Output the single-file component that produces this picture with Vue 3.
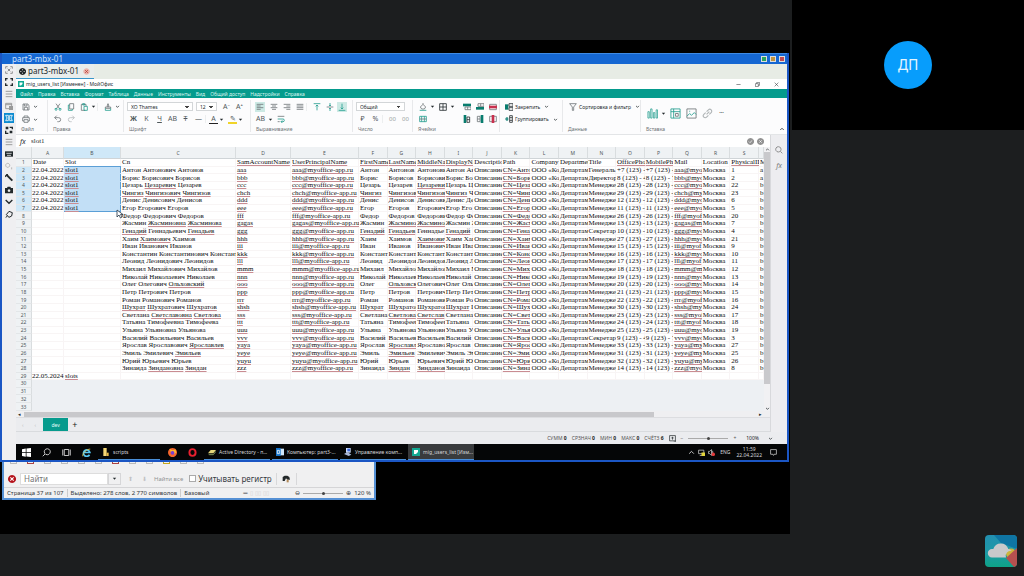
<script setup>
import { h, ref } from 'vue'

const G = '#6d7376'
const T = '#1f9c8d'
const K = '#22292c'
const R = '#c8304e'

// Each icon is a list of [path, colour, filled, stroke width]
const icons = {
  save: [['M1.5 1.5h7l2 2v7h-9zM3.5 1.5v3h4v-3M3.5 10.500v-4h5v4', G]],
  print: [['M3 4V1.500h6V4M3 9H1V4h10v5H9M3 7h6v4H3z', G]],
  cut: [['M3 1l5 7M9 1L4 8', G], ['M3 8a1.500 1.500 0 1 0 .1 0M9 8a1.500 1.500 0 1 0 .1 0', T]],
  copy: [['M4 1h6v8H4z', G], ['M4 3H2v8h6V9', T]],
  paste: [['M8 11H2V2h7v3', G], ['M4 1h3v2H4zM6 5h5v6H6z', T]],
  brush: [['M2 6h8v2H2zM5 6V3l1-2 1 2v3', G], ['M2 8v3h8V8', T]],
  undo: [['M4 1L1 4l3 3M1 4h6a3 3 0 0 1 0 6H5', G]],
  redo: [['M8 1l3 3-3 3M11 4H5a3 3 0 0 0 0 6h2', '#b4b9bb']],
  left: [['M1 2h10M1 4.500h6M1 7h10M1 9.500h6', G]],
  center: [['M1 2h10M3 4.500h6M1 7h10M3 9.500h6', G]],
  right: [['M1 2h10M5 4.500h6M1 7h10M5 9.500h6', G]],
  justify: [['M1 2h10M1 4.500h10M1 7h10M1 9.500h10', G]],
  vtop: [['M1 1h10M6 11V3M4 5l2-2 2 2', T]],
  vmid: [['M1 6h10', G], ['M6 0v4M4.500 3L6 4.500 7.500 3M6 12V8M4.500 9L6 7.500 7.500 9', T]],
  vbot: [['M1 11h10M6 1v8M4 7l2 2 2-2', T]],
  wrap: [['M1 2h10M1 10h3', G], ['M1 6h8a2 2 0 0 1 0 4H6M8 8l-2 2 2 2', T]],
  fill: [['M2 6l4-4 4 4-2 3H4zM6 2V0', G], ['M1 11h10', T]],
  borders: [['M1 1h10v10H1zM6 1v10M1 6h10', K]],
  merge: [['M1 2h10v8H1zM4 2v8M8 2v8', T], ['M1 6h10', G]],
  rowAdd: [['M0 1h12v4H0z', '#087c6e', 1], ['M3 6h9v4H3zM7 6v4', G]],
  rowBelow: [['M3 1h9v4H3zM7 1v4', G], ['M0 6h12v4H0z', '#087c6e', 1]],
  rowDel: [['M1 2h10v8H1z', G], ['M0 4h12v4H0z', R, 1]],
  colAdd: [['M1 0h4v12H1z', '#087c6e', 1], ['M6 3h4v8H6zM6 7h4', K]],
  colRight: [['M2 2h4v8H2zM2 6h4', G], ['M7 0h4v12H7z', '#087c6e', 1]],
  colDel: [['M1 2h10v8H1z', G], ['M4 0h4v12H4z', R, 1]],
  freeze: [['M0 2h5v8H0z', '#087c6e', 1], ['M6 1h6v4H6zM6 7h6v4H6z', K]],
  group: [['M2 4h2v4H2zM0 6h5', '#087c6e'], ['M7 1h4v10H7zM7 4h4M7 8h4', K]],
  funnel: [['M1 1h10L7 6v5H5V6z', G]],
  chart: [['M1 11V4h1.500v7zM4 11V1h1.500v10zM7 11V5h1.500v6zM10 11V2h1.500v9z', T, 0, 0.8]],
  pivot: [['M1 1h10v10H1zM1 4h10M4 1v10', T, 0, 0.9], ['M6 6h3v3H6z', G, 0, 0.9]],
  image: [['M1 1h10v10H1z', G, 0, 0.9], ['M1 9l3-3 2 2 3-3 2 2M4 3v1', T, 0, 0.9]],
  link: [['M5 7l3-3M5 4l2-2a2 2 0 0 1 3 3L8 7M4 5L2 7a2 2 0 0 0 3 3l2-2', '#b0b5b7']],
  down: [['M2.500 4.500L6 8l3.500-3.500', K, 0, 1.8]],
  caret: [['M2 4h8L6 9z', K, 1]],
  up: [['M2.500 8L6 4.500 9.500 8', K, 0, 1.6]],
  search: [['M5 1a4 4 0 1 0 .1 0M8 8l3 3', '#777']],
  lens: [['M7 1a4 4 0 1 0 .1 0M4 8l-3 3', '#ddd']],
  ok: [['M6 0a6 6 0 1 0 .1 0', '#929292', 1], ['M3 6l2 2 4-4', '#fff']],
  no: [['M6 0a6 6 0 1 0 .1 0', '#929292', 1], ['M4 4l4 4M8 4L4 8', '#fff']],
  close: [['M6 0a6 6 0 1 0 .1 0', '#b5121b', 1], ['M3.500 3.500l5 5M8.500 3.500l-5 5', '#fff', 0, 1.6]],
  tabClose: [['M6 .5a5.500 5.500 0 1 0 .1 0', '#e9b4ac', 1], ['M3.500 3.500l5 5M8.500 3.500l-5 5', '#b3372e']],
  gearball: [['M6 0a6 6 0 1 0 .1 0', '#20262a', 1], ['M6 2v8M2 6h8', '#fff'], ['M6 4a2 2 0 1 0 .1 0', '#20262a', 1]],
  min: [['M1 6h10', K]],
  rest: [['M1 4h7v7H1zM4 4V1h7v7H8', K]],
  x: [['M1.500 1.500l9 9M10.500 1.500l-9 9', K]],
  doc: [['M0 0h12v12H0z', '#12a892', 1], ['M3 3h6v3L6 9H3z', '#fff', 1]],
  win: [['M0 1.500l5-.7v5H0zM6 .7l6-.7v5.800H6zM0 6.500h5v5l-5-.7zM6 6.500h6V12l-6-.7z', '#fff', 1]],
  view: [['M3 2h6v8H3zM1 2v8M11 2v8', '#ddd']],
  ie: [['M10 9a4.300 4.300 0 1 1 .5-3H3', '#56c8f4', 0, 2.2], ['M1 11C0 7 7 1 11 1.500', '#f5d24a', 0, 1]],
  folder: [['M2 0h5v12H2z', '#f6d774', 1], ['M7 7h3v5H7z', '#e8b947', 1]],
  fox: [['M6 0a6 6 0 1 0 .1 0', '#f6662c', 1], ['M2 1l4 2 4-1 1 4-3 2-4-2z', '#ffb72e', 1], ['M6 4a2.500 2.500 0 1 0 .1 0', '#7a3fd0', 1]],
  opera: [['M6 1.500C.5 1.500 .5 10.500 6 10.500S11.500 1.500 6 1.500', '#e8202f', 0, 2.6]],
  ad: [['M0 8l4-5h8l-4 5z', '#e6d77a', 1], ['M1 10h7l4-5', '#9bb06a']],
  outlook: [['M4 1h8v10H4z', '#cfe6fa', 1], ['M0 0h7v12H0z', '#1573c9', 1], ['M2 3.500h3v5H2z', '#fff']],
  pc: [['M3 0h7v7H3z', '#cfe0ff', 1], ['M5 1h4v4H5z', '#3b66d9', 1], ['M0 9l5-3 6 4-4 2z', '#a9b8d8', 1]],
  net: [['M1 2h9v6H1zM3 11h5', '#ddd'], ['M6 6h6v6H6z', '#e3d43b', 1]],
  vol: [['M1 4h2l3-3v10L3 8H1zM8 3v6', '#ddd'], ['M9 6a3 3 0 1 0 .1 0', '#e23b3b', 1]],
  note: [['M1 1h10v8H7l-1 2-1-2H1z', '#ddd']],
  binocular: [['M1 3l3-2h4l3 2 1 4H8L6 5 4 9H1z', '#23282a', 1], ['M7 7h3v4H7z', '#b38a5a', 1]],
  fit: [['M1 4V1h3M8 1h3v3M11 8v3H8M4 11H1V8M4 4l4 4M8 4L4 8', '#777']],
  full: [['M1 4V1h3M8 1h3v3M11 8v3H8M4 11H1V8', K, 0, 2]],
  lines: [['M1 2h10M1 6h10M1 10h10', '#888']],
  windows: [['M1 2h9v8H1zM1 4h9', '#888'], ['M6 6h6v6H6z', '#999', 1]],
  split: [['M1 2h4v8H1l2-4zM11 2H7v8h4L9 6z', '#fff']],
  swap: [['M1 5V1h4v4zM7 7h4v4H7z', K, 1], ['M7 2h4v3M1 7v4h4', K, 0, 2]],
  keyb: [['M0 2h12v8H0z', K, 1], ['M2 5h8M3 8h6', '#eee']],
  gears: [['M4 2a3 3 0 1 0 .1 0M10 8v3', '#aaa']],
  wrench: [['M2 1l3 3 6 6', K, 0, 3], ['M0 4l4-4', K, 0, 2]],
  camera: [['M0 3h3l1-2h4l1 2h3v8H0z', K, 1], ['M6 5a2 2 0 1 0 .1 0', '#eee', 1]],
  chev: [['M1 3l5 5 5-5', K, 0, 2]],
  plug: [['M4 9L2 7l4-5 5 2-1 5-4 2zM1 11l3-2', K, 0, 1.5]],
  fnbox: [['M1 1h10v9H1zM6 3v5M4 5h4M8 12h4V9', K]],
}
const Ico = (p) =>
  h('svg', { viewBox: '0 0 12 12', 'aria-hidden': 'true' },
    icons[p.n].map(([d, c, f, w]) => h('path', { d, fill: f ? c : 'none', stroke: f ? 'none' : c, 'stroke-width': w || 1.2 })))
Ico.props = ['n']

const tools = ['fit', 'full', 'lines', 'windows', 'split', 'swap', 'lines', 'keyb', 'gears', 'wrench', 'camera', 'chev', 'plug']
const menu = ['Файл', 'Правка', 'Вставка', 'Формат', 'Таблица', 'Данные', 'Инструменты', 'Вид', 'Общий доступ', 'Надстройки', 'Справка']

const i = (n, c) => ({ n, c })
const t = (x, c) => ({ x, c })
const dd = { n: 'caret', c: 'dd' }
const dv = { n: 'down', c: 'dd' }
const sp = { c: 'sp' }
const groups = [
  { k: 'file', label: 'Файл', rows: [[i('save'), dv], [i('print'), dv]] },
  { k: 'edit', label: 'Правка', rows: [[i('cut'), i('copy'), i('paste'), dd, sp, i('brush'), dv], [i('undo'), i('redo')]] },
  { k: 'font', label: 'Шрифт', rows: [[{ s: 'XO Thames', c: 'wide', a: 'Шрифт' }, { s: '12', c: 'num', a: 'Размер шрифта' }, t('A⁻'), t('A⁺')],
    [t('Ж', 'b'), t('К'), t('Ч', 'u'), t('AB'), t('Т', 'st'), t('—'), sp, t('A', 'tc'), dd, t('✎', 'hl'), dd]] },
  { k: 'align', label: 'Выравнивание', rows: [[i('left', 'on'), i('center'), i('right'), i('justify'), sp, i('vtop'), i('vmid'), i('vbot', 'on')], [t('AB'), dd, i('wrap')]] },
  { k: 'number', label: 'Число', rows: [[{ s: 'Общий', c: 'mid', a: 'Формат числа' }], [t('₽'), t('%'), sp, t('00', 'dec'), t('00', 'dec')]] },
  { k: 'cells', label: 'Ячейки', rows: [[i('fill'), dd, i('borders'), dd], [i('merge')]] },
  { k: 'rowsg', label: '', rows: [[i('rowAdd'), i('rowBelow'), i('rowDel')], [i('colAdd'), i('colRight'), i('colDel')]] },
  { k: 'pin', label: '', rows: [[i('freeze'), t('Закрепить', 'txt'), dv], [i('group'), t('Группировать', 'txt'), dv]] },
  { k: 'data', label: 'Данные', rows: [[i('funnel'), t('Сортировка и фильтр', 'txt'), dv], []] },
  { k: 'insert', label: 'Вставка', rows: [[i('chart', 'big'), dd, i('pivot', 'big'), i('image', 'big'), i('link', 'big'), t('•••')]] },
]

const letters = 'ABCDEFGHIJKLMNOPQRS'.split('')
// Words with a leading * carry a spelling mark
const people = [
  ['Антон Антонович Антонов', 'aaa', '+7 (123) -', 1, 'Генераль'],
  ['Борис Борисович Борисов', 'bbb', '8 (123) - 4', 2, 'Директор'],
  ['Цезарь *Цезаревич Цезарев', 'ccc', 28, 22],
  ['*Чингиз *Чингизович *Чингизов', 'chch', 29, 23],
  ['Денис Денисович Денисов', 'ddd', 12, 6],
  ['Егор Егорович Егоров', 'eee', 11, 5],
  ['Федор Федорович Федоров', 'fff', 26, 20],
  ['Жасмин *Жасминовна *Жасминова', 'gagas', 13, 7],
  ['*Генадий Геннадьевич *Генадьев', 'ggg', 10, 4, 'Секретар'],
  ['Хаим *Хаимович Хаимов', 'hhh', 27, 21],
  ['Иван Иванович Иванов', 'iii', 15, 9],
  ['Константин Константинович Константин', 'kkk', 16, 10],
  ['Леонид Леонидович Леонидов', 'lll', 17, 11],
  ['Михаил Михайлович Михайлов', 'mmm', 18, 12],
  ['Николай Николаевич Николаев', 'nnn', 19, 13],
  ['Олег Олегович *Ольховский', 'ooo', 20, 14],
  ['Петр Петрович Петров', 'ppp', 21, 15],
  ['Роман Романович Романов', 'rrr', 22, 16],
  ['*Шухрат *Шухратович *Шухратов', 'shsh', 30, 24],
  ['Светлана *Светславовна *Светлова', 'sss', 23, 17],
  ['Татьяна Тимофеевна Тимофеева', 'ttt', 24, 18],
  ['Ульяна Ульяновна Ульянова', 'uuu', 25, 19],
  ['Василий Васильевич Васильев', 'vvv', '9 (123) - 4', 3, 'Секретар'],
  ['Ярослав Ярославович *Ярославлев', 'yaya', 33, 27],
  ['Эмиль Эмилевич *Эмильев', 'yeye', 31, 25],
  ['Юрий Юрьевич Юрьев', 'yuyu', 32, 26],
  ['Зинаида *Зиндановна *Зиндан', 'zzz', 14, 8],
]
const head = ['Date', 'Slot', 'Cn', '*SamAccountName', '*UserPrincipalName', '*FirstName', '*LastName', '*MiddleNa', '*DisplayNa', 'Descriptio', 'Path', 'Company', 'Departmen', 'Title', '*OfficePho', '*MobilePho', 'Mail', 'Location', '*PhysicalID', 'M']
const short = (s, n) => s.slice(0, s[0] === '*' ? n + 1 : n)
const body = people.map(([cn, sam, ph, id, title], n) => {
  const [f, m, l] = cn.split(' ')
  const phone = typeof ph === 'number' ? ph + ' (123) -' : ph
  return [n < 6 ? '22.04.2022' : '', n < 6 ? '*slot1' : '', cn, '*' + sam, '*' + sam + '@myoffice-app.ru', short(f, 8), short(l, 8), short(m, 8), short(f + ' ' + l.replace('*', ''), 8), 'Описание',
    '*CN=' + f.replace('*', '').slice(0, 4), 'ООО «Ко', 'Департам', title || 'Менеджер', phone, phone.replace('- 4', '- 7'), '*' + short(sam + '@myoffice', 8), 'Москва', String(id), n < 2 ? 'a' : 'b']
})
const blank = () => Array(20).fill('')
const last = blank()
last[0] = '22.05.2024'
last[1] = '*slots'
const rows = [head, ...body, last, blank(), blank(), blank(), blank()]
const words = (s) => s.split(' ').map((w) => (w[0] === '*' ? { w: w.slice(1), e: true } : { w, e: false }))

const stats = [['СУММ', 0], ['СРЗНАЧ', 0], ['МИН', 0], ['МАКС', 0], ['СЧЁТЗ', 6]]
const tasks = [
  { n: 'ad', x: 'Active Directory - п...' },
  { n: 'outlook', x: 'Компьютер: part3-...' },
  { n: 'pc', x: 'Управление комп...' },
  { n: 'doc', x: 'mig_users_list [Изм...', on: true },
]
const formula = ref('slot1')
const query = ref('')
const matchCase = ref(false)
</script>

<template>
  <div class="call">
    <main class="stage">
      <section class="remote">
        <header class="rtitle">
          <span>part3-mbx-01</span>
          <div class="wbtns">
            <button class="g" aria-label="Свернуть"></button><button class="y" aria-label="Развернуть"></button><button class="r" aria-label="Закрыть"></button>
          </div>
        </header>
        <div class="rbody">
          <nav class="tools" aria-label="Инструменты сеанса">
            <button v-for="(n, k) in tools" :key="k" :class="{ on: n === 'split' }" :aria-label="n"><Ico :n="n" /></button>
          </nav>
          <div class="desk">
            <div class="tabs">
              <div class="tab"><Ico n="gearball" /><span>part3-mbx-01</span><button aria-label="Закрыть вкладку"><Ico n="tabClose" /></button></div>
            </div>
            <div class="apptitle">
              <Ico n="doc" /><span>mig_users_list [Изменен] - МойОфис</span>
              <div class="appbtns"><Ico n="min" /><Ico n="rest" /><Ico n="x" /></div>
            </div>
            <nav class="menu"><button v-for="m in menu" :key="m">{{ m }}</button></nav>
            <div class="ribbon">
              <div v-for="g in groups" :key="g.k" class="group" :class="g.k">
                <div v-for="(r, k) in g.rows" :key="k" class="line">
                  <template v-for="(it, j) in r" :key="j">
                    <select v-if="it.s" :class="it.c" :aria-label="it.a"><option>{{ it.s }}</option></select>
                    <i v-else-if="it.c === 'sp'" class="sp"></i>
                    <button v-else :class="it.c" :aria-label="it.x || it.n"><Ico v-if="it.n" :n="it.n" /><template v-else>{{ it.x }}</template></button>
                  </template>
                </div>
                <div class="glabel">{{ g.label }}</div>
              </div>
              <button class="collapse" aria-label="Свернуть ленту"><Ico n="up" /></button>
            </div>
            <div class="work">
              <div class="book">
                <div class="fbar">
                  <label for="fx">fx</label><input id="fx" v-model="formula" />
                  <button aria-label="Принять"><Ico n="ok" /></button><button aria-label="Отменить"><Ico n="no" /></button>
                </div>
                <div class="sheetwrap">
                  <table class="sheet">
                    <colgroup><col class="w0" /><col class="wa" /><col class="wb" /><col class="wc" /><col class="wd" /><col class="we" /><col v-for="n in 14" :key="n" /><col class="wt" /></colgroup>
                    <thead><tr><th></th><th v-for="l in letters" :key="l" :class="{ hot: l === 'B' }">{{ l }}</th><th></th></tr></thead>
                    <tbody>
                      <tr v-for="(r, n) in rows" :key="n" :class="{ out: n > 28 }">
                        <th :class="{ hot: n > 0 && n < 7 }">{{ n + 1 }}</th>
                        <td v-for="(c, j) in r" :key="j" :class="{ date: j === 0 && n > 0, sel: j === 1 && n > 0 && n < 7, first: j === 1 && n === 1, end: j === 1 && n === 6 }"><div><template v-for="(w, q) in words(c)" :key="q">{{ q ? ' ' : '' }}<span :class="{ err: w.e }">{{ w.w }}</span></template></div></td>
                      </tr>
                    </tbody>
                  </table>
                  <div class="vbar"><Ico n="up" /><i></i><Ico n="down" /></div>
                  <svg class="cursor" viewBox="0 0 8 10"><path d="M1 1v7l2-2 1.500 3 1.500-1-1.500-2.500H7z" fill="#fff" stroke="#234" stroke-width=".8" /></svg>
                </div>
                <div class="hbar"><span>◂</span><div><i></i></div><span>▸</span></div>
                <div class="sheets"><span>‹</span><span>‹</span><button class="dev">dev</button><button class="add" aria-label="Добавить лист">+</button></div>
              </div>
              <aside class="side"><Ico n="search" /><em>fx</em></aside>
            </div>
            <div class="status">
              <span v-for="s in stats" :key="s[0]">{{ s[0] }} <b>{{ s[1] }}</b></span>
              <Ico n="fnbox" /><span>−</span><input type="range" aria-label="Масштаб" /><span>+</span><span class="pct">100%</span><Ico n="down" />
            </div>
            <div class="taskbar">
              <button class="sq" aria-label="Пуск"><Ico n="win" /></button><button class="sq" aria-label="Поиск"><Ico n="lens" /></button><button class="sq" aria-label="Представление задач"><Ico n="view" /></button><button class="sq" aria-label="Internet Explorer"><Ico n="ie" /></button>
              <button class="task run"><Ico n="folder" /><span>scripts</span></button>
              <button class="sq ff" aria-label="Firefox"><Ico n="fox" /></button><button class="sq" aria-label="Opera"><Ico n="opera" /></button>
              <button v-for="k in tasks" :key="k.n" class="task run" :class="{ on: k.on }"><Ico :n="k.n" /><span>{{ k.x }}</span></button>
              <div class="tray"><svg viewBox="0 0 12 12"><path d="M2 8l4-4 4 4" fill="none" stroke="#ddd" stroke-width="1.500" /></svg><Ico n="net" /><Ico n="vol" /><span>ENG</span><time>11:59<br />22.04.2022</time><Ico n="note" /></div>
            </div>
          </div>
        </div>
      </section>
      <section class="find">
        <div class="cut"><i></i><i class="a"></i><i></i><i></i><i></i><i></i><i class="a"></i><i></i><i></i><i class="b"></i><i></i><i></i></div>
        <div class="frow">
          <button aria-label="Закрыть панель"><Ico n="close" /></button>
          <input v-model="query" class="q" type="text" placeholder="Найти" aria-label="Найти" />
          <button class="drop" aria-label="История поиска"><Ico n="caret" /></button>
          <button class="pale">⬆</button><button class="pale">⬇</button>
          <button class="all">Найти все</button>
          <label class="case"><input v-model="matchCase" type="checkbox" />Учитывать регистр</label>
          <button class="bino" aria-label="Найти и заменить"><Ico n="binocular" /></button>
        </div>
        <div class="fstat">
          <span class="p1">Страница 37 из 107</span><span class="p2">Выделено: 278 слов, 2 770 символов</span><span class="p3">Базовый</span><span>═</span><span class="dim">▯ ▯▯ ▯▯</span><span>⊖</span><input type="range" aria-label="Масштаб документа" /><span>⊕</span><span>120 %</span>
        </div>
      </section>
    </main>
    <aside class="people">
      <div class="tile"><div class="avatar">ДП</div></div>
      <svg class="logo" viewBox="0 0 32 32" role="img" aria-label="Облако">
        <defs>
          <clipPath id="lc"><rect width="32" height="32" rx="4" /></clipPath>
          <linearGradient id="lg" x1="0" y1="0" x2="0" y2="1"><stop offset="0" stop-color="#238fb0" /><stop offset=".55" stop-color="#1d9aa6" /><stop offset="1" stop-color="#0ea387" /></linearGradient>
        </defs>
        <g clip-path="url(#lc)">
          <path d="M0 0h32v32H0z" fill="url(#lg)" />
          <path d="M9 0h23v14L16 8z" fill="#0f75a3" />
          <circle cx="26" cy="18.500" r="5" fill="#cdb63c" />
          <path d="M21 23L32 13v19h-3z" fill="#b5504f" />
          <path d="M7 22.500a4.200 4.200 0 0 1 0-8.400h1.300a7.800 7.800 0 0 1 15 0 4.200 4.200 0 0 1 3.500 1.900 5 5 0 0 0-5.800 6.500z" fill="#c9c9cb" />
        </g>
      </svg>
    </aside>
  </div>
</template>

<style>
body { margin: 0; background: #1c1e1f; }
</style>

<style scoped>
* { box-sizing: border-box; }
button, input, select { font: inherit; color: inherit; border: 0; padding: 0; margin: 0; background: none; border-radius: 0; }
button { display: flex; align-items: center; justify-content: center; flex: none; white-space: nowrap; }
svg { display: block; flex: none; width: 8px; height: 8px; }
.call { display: grid; grid-template-columns: minmax(0, 1fr) 232px; column-gap: 2px; height: 100vh; min-height: 540px; background: #1c1e1f; font: 5px/6px "Noto Sans", "Open Sans", sans-serif; color: #252b2e; }
.stage { display: flex; flex-direction: column; margin: 40px 0 42px; padding: 13px 1px 34px 0; background: #000; min-height: 0; }
.people { display: flex; flex-direction: column; justify-content: space-between; }
.tile { display: flex; height: 130px; align-items: center; justify-content: center; background: #000; }
.avatar { width: 48px; height: 48px; border-radius: 50%; background: #079dfc; color: #e3f5ff; font: 14px/48px Roboto, sans-serif; text-align: center; }
.logo { width: 32px; height: 32px; margin: 0 7px 9px auto; }

.remote { flex: 1; display: flex; flex-direction: column; min-height: 0; border: 2px solid #1b56c4; border-top: 0; background: #ebecef; }
.rtitle { display: flex; align-items: center; justify-content: space-between; height: 11px; padding: 0 2px 0 10px; background: #1567d2; border-top: 1px solid #3e8be4; color: #cfe4ff; font-size: 8px; line-height: 10px; flex: none; }
.wbtns { display: flex; gap: 3px; }
.wbtns button { width: 6px; height: 6px; border: 1px solid #ddd; }
.wbtns .g { background: #2aa45c; } .wbtns .y { background: #c09341; } .wbtns .r { background: #bf4a52; }
.rbody { flex: 1; display: flex; min-height: 0; }
.tools { display: flex; flex-direction: column; width: 14px; padding-top: 1px; gap: 2px; align-items: center; flex: none; background: #efeff1; }
.tools button { width: 10px; height: 10px; }
.tools .on { background: #0d8bd0; }
.desk { flex: 1; min-width: 0; display: flex; flex-direction: column; }
.tabs { height: 15px; background: #e7ece5; flex: none; display: flex; }
.tab { display: flex; align-items: center; gap: 2px; padding: 0 4px 0 3px; border-bottom: 1px solid #3895c9; background: #e9edeb; font-size: 8px; line-height: 12px; color: #20282c; }
.tab svg { width: 7px; height: 7px; } .tab button { margin-left: 2px; }
.apptitle { display: flex; align-items: center; height: 10px; flex: none; padding: 0 8px 0 2px; gap: 2px; background: #fff; }
.apptitle svg { width: 6px; height: 6px; }
.appbtns { margin-left: auto; display: flex; gap: 14px; }
.appbtns svg { width: 5px; height: 5px; }
.menu { display: flex; gap: 5px; height: 9px; padding-left: 4px; flex: none; background: #059b8d; color: #d6f5ef; }
.ribbon { display: flex; height: 37px; flex: none; background: #fcfcfd; border-bottom: 1px solid #e3e5e7; position: relative; }
.group { display: flex; flex-direction: column; padding: 1px 0 0 3px; margin: 2px 0; border-left: 1px solid #e8e9eb; flex: none; }
.group:first-child, .rowsg { border-left: 0; }
.line { display: flex; align-items: center; height: 12px; }
.line + .line { margin-top: 1px; }
.line button { width: 13px; height: 10px; font-size: 7px; color: #50585b; }
.line .dd { width: 7px; } .line .dd svg { width: 5px; height: 5px; }
.line .big svg { width: 11px; height: 11px; }
.line .on { background: #cce9e4; width: 10px; margin: 0 2px 0 1px; }
.line .b { font-weight: 700; } .line .u { text-decoration: underline; } .line .st { text-decoration: line-through; }
.line .dec { color: #9a9fa2; font-size: 6px; }
.line .tc { box-shadow: inset 0 -1px #222; width: 9px; } .line .hl { box-shadow: inset 0 -2px #f0d429; width: 9px; margin-left: 3px; }
.line .txt { width: auto; font-size: 5px; margin-right: 3px; color: #252b2e; }
.sp { width: 4px; height: 8px; border-left: 1px solid #eceeef; }
.glabel { height: 6px; margin: 1px 0 0 2px; color: #6c7275; }
.line select { height: 9px; border: 1px solid #d3d6d8; background: #fff; padding: 0 3px; margin-right: 3px; font-size: 5px; appearance: none; background-image: linear-gradient(45deg, transparent 50%, #444 50%), linear-gradient(-45deg, transparent 50%, #444 50%); background-repeat: no-repeat; background-size: 2px 2px; background-position: right 5px center, right 3px center; }
.line .wide { width: 66px; } .line .num { width: 21px; } .line .mid { width: 49px; }
.file { width: 31px; } .edit { width: 76px; } .font { width: 127px; } .align { width: 102px; } .number { width: 60px; } .cells { width: 42px; } .rowsg { width: 45px; padding-left: 6px; } .pin { width: 63px; padding-left: 2px; } .data { width: 78px; }
.insert { flex: 1; } .insert .line { height: 25px; } .insert .big { width: 16px; } .insert .line button:last-child { font-size: 4px; }
.collapse { position: absolute; right: 2px; bottom: 2px; } .collapse svg { width: 6px; height: 6px; }
.work { flex: 1; min-height: 0; display: flex; }
.book { flex: 1; min-width: 0; display: flex; flex-direction: column; }
.fbar { display: flex; align-items: center; height: 12px; flex: none; padding: 0 6px 0 4px; gap: 3px; background: #fff; }
.fbar label { font-style: italic; font-size: 7px; line-height: 9px; width: 8px; }
.fbar input { flex: 1; min-width: 0; height: 10px; font: 7px/9px "Liberation Serif", serif; }
.fbar svg { width: 7px; height: 7px; }
.sheetwrap { flex: 1; min-height: 0; display: flex; position: relative; background: #eef0f3; }
.sheet { flex: 1; min-width: 0; width: 100%; height: 100%; table-layout: fixed; border-collapse: separate; border-spacing: 0; font: 7px/7px "Liberation Serif", serif; color: #0c0e10; }
.w0 { width: 16px; } .wa { width: 32px; } .wb { width: 57px; } .wc { width: 115px; } .wd { width: 55px; } .we { width: 68px; } .wt { width: 5px; }
.sheet th { padding: 0; font: 5px/6px "Noto Sans", sans-serif; background: #eff2f4; border-right: 1px solid #d9dddf; color: #50575a; text-align: center; }
.sheet thead th { height: 12px; border-bottom: 1px solid #cfd4d7; }
.sheet tbody th { border-bottom: 1px solid #e3e6e8; }
.sheet .hot { background: #cfe8f8; }
.sheet td { padding: 0; background: #fff; box-shadow: inset -1px 0 #f8f4f5; border-bottom: 1px solid #f8f5f5; vertical-align: middle; }
.sheet td div { height: 6px; line-height: 6px; white-space: nowrap; padding-left: 1px; overflow-x: clip; overflow-y: visible; }
.sheet td.date div { padding-left: 0; }
.sheet .out td { background: #edf0f3; border-color: #edf0f3; box-shadow: none; }
.sheet td.sel { background: #c2dff6; border-color: #c2dff6; box-shadow: inset -1px 0 #5b9fd6; }
.sheet td.first { box-shadow: inset -1px 0 #5b9fd6, 0 -1px #5b9fd6; } .sheet td.end { border-bottom-color: #5b9fd6; }
.err { text-decoration: underline #c98c92 1px; text-underline-offset: 1px; text-decoration-skip-ink: none; }
.vbar { width: 6px; flex: none; display: flex; flex-direction: column; align-items: center; background: #f1f1f3; }
.vbar svg { width: 5px; height: 5px; } .vbar i { width: 6px; height: 88%; margin-bottom: auto; background: #c9c9cc; }
.cursor { position: absolute; left: 100px; top: 62px; width: 8px; height: 10px; }
.hbar { display: flex; align-items: center; height: 7px; flex: none; padding: 0 8px 0 2px; gap: 3px; background: #efeff1; border-bottom: 1px solid #dcdde0; }
.hbar div { flex: 1; } .hbar i { display: block; width: 86%; height: 5px; background: #c8c8cb; }
.sheets { display: flex; align-items: center; height: 14px; flex: none; padding-left: 6px; gap: 11px; border-bottom: 1px solid #d9dbde; color: #bbb; background: #ebecef; }
.sheets .dev { width: 25px; height: 13px; margin-left: -4px; background: #079b8d; color: #e4fffa; } .sheets .add { margin-left: -7px; font-size: 9px; color: #222; }
.side { width: 17px; flex: none; display: flex; flex-direction: column; align-items: center; gap: 8px; padding-top: 11px; background: #ededf0; border-left: 1px solid #d8d9dc; color: #777; font-size: 7px; line-height: 8px; }
.status { display: flex; align-items: center; justify-content: flex-end; height: 12px; flex: none; gap: 5px; padding-right: 14px; background: #ebecef; font-size: 5px; color: #555; white-space: nowrap; }
.status b { color: #222; } .status svg { width: 7px; height: 7px; } .status svg:last-child { width: 5px; height: 5px; } .status .pct { margin: 0 4px 0 5px; color: #222; }
input[type="range"] { appearance: none; width: 40px; height: 4px; background: linear-gradient(#aaa, #aaa) center / 100% 1px no-repeat; }
input[type="range"]::-webkit-slider-thumb { appearance: none; width: 3px; height: 3px; border-radius: 50%; background: #444; }
.taskbar { display: flex; height: 16px; flex: none; background: #050607; color: #d6d8da; font-size: 5px; }
.taskbar .sq { width: 20px; } .taskbar .sq svg { width: 9px; height: 9px; }
.task { padding: 0 4px; gap: 3px; width: 66px; margin-left: 2px; border-bottom: 1px solid #4a90d9; justify-content: flex-start; overflow: hidden; }
.task.on { background: #393b3d; }
.sq + .task { width: 62px; } .sq.ff { margin-left: 2px; } .sq.ff + .sq + .task { width: 66px; }
.tray { margin-left: auto; display: flex; align-items: center; gap: 3px; padding-right: 10px; }
.tray svg { width: 7px; height: 7px; } .tray time { margin: 0 5px 0 3px; text-align: center; } .tray span { margin-left: 2px; }

.find { height: 38px; flex: none; width: 374px; margin-left: 2px; border: 2px solid #5590d4; border-top: 0; background: #f0f0f1; font-size: 6px; line-height: 8px; color: #353a3e; display: flex; flex-direction: column; }
.cut { display: flex; gap: 10px; height: 8px; padding-left: 6px; flex: none; }
.cut i { width: 7px; height: 2px; border: 1px solid #bbb; border-top: 0; } .cut .a { border-color: #a44; } .cut .b { border-color: #c5a820; }
.frow { flex: 1; display: flex; align-items: center; padding-left: 4px; border-bottom: 1px solid #d5d5d7; }
.q { width: 88px; height: 12px; margin-left: 4px; padding: 0 3px; background: #fff; border: 1px solid #ddd; font-size: 8px; } .q::placeholder { color: #777; }
.drop { width: 13px; height: 12px; border: 1px solid #d6d6d8; } .drop svg { width: 5px; height: 5px; }
.pale { width: 14px; color: #c2c2c4; } .drop + .pale { margin-left: 2px; }
.all { margin: 0 6px 0 3px; color: #929496; }
.case { display: flex; align-items: center; gap: 2px; font-size: 8px; line-height: 10px; white-space: nowrap; }
.case input { appearance: none; width: 7px; height: 7px; border: 1px solid #aaa; background: #fff; }
.bino { width: 21px; height: 12px; margin-left: 4px; border: solid #d8d8da; border-width: 0 1px; }
.fstat { display: flex; align-items: center; height: 10px; flex: none; padding: 0 3px; gap: 3px; white-space: nowrap; }
.fstat span { flex: none; } .p1, .p2 { border-right: 1px solid #ccc; padding-right: 3px; } .p3 { width: 56px; } .dim { color: #d0d0d2; margin-right: auto; }
</style>
